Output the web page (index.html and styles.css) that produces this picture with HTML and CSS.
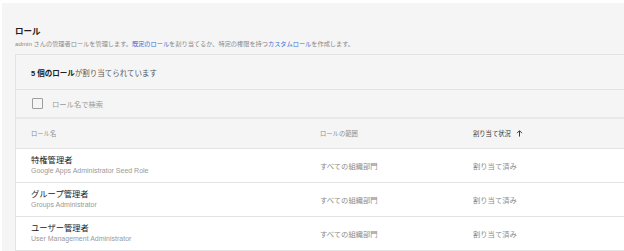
FILE: index.html
```html
<!DOCTYPE html>
<html lang="ja">
<head>
<meta charset="utf-8">
<link rel="stylesheet" href="styles.css">
</head>
<body>
<div class="page">
  <h1 class="title">ロール</h1>
  <p class="desc">admin さんの管理者ロールを管理します。<a class="link">既定のロール</a>を割り当てるか、特定の権限を持つ<a class="link">カスタムロール</a>を作成します。</p>
  <div class="card">
    <div class="card-head"><b>5 個のロール</b>が割り当てられています</div>
    <div class="search"><span class="check"></span><span class="search-text">ロール名で検索</span></div>
    <div class="row head-row">
      <div class="c1">ロール名</div>
      <div class="c2">ロールの範囲</div>
      <div class="c3 sorted">割り当て状況 <svg class="arrow" width="7" height="7" viewBox="0 0 8 8"><path d="M4 7.5V1M1.2 3.6L4 0.8 6.8 3.6" fill="none" stroke="#333" stroke-width="1.1"/></svg></div>
    </div>
    <div class="row data-row">
      <div class="c1"><div class="name">特権管理者</div><div class="sub">Google Apps Administrator Seed Role</div></div>
      <div class="c2">すべての組織部門</div>
      <div class="c3">割り当て済み</div>
    </div>
    <div class="row data-row">
      <div class="c1"><div class="name">グループ管理者</div><div class="sub">Groups Administrator</div></div>
      <div class="c2">すべての組織部門</div>
      <div class="c3">割り当て済み</div>
    </div>
    <div class="row data-row">
      <div class="c1"><div class="name">ユーザー管理者</div><div class="sub">User Management Administrator</div></div>
      <div class="c2">すべての組織部門</div>
      <div class="c3">割り当て済み</div>
    </div>
  </div>
</div>
</body>
</html>
```

FILE: styles.css
```css
* { box-sizing: border-box; }
html, body { margin: 0; padding: 0; background: #ffffff; }
body {
  font-family: "Liberation Sans", Roboto, "Noto Sans CJK JP", sans-serif;
  color: #212121;
  height: 251px;
  overflow: hidden;
}
.page {
  margin: 3px 0 0 2px;
  background: #f5f5f5;
  padding: 23px 0 0 13px;
  height: 260px;
  overflow: hidden;
}
.title {
  margin: 0;
  font-size: 8.5px;
  line-height: 10px;
  font-weight: 700;
  color: #202020;
}
.desc {
  margin: 3px 0 0 0;
  font-size: 6.2px;
  line-height: 9px;
  color: #8a8a8a;
}
.link { color: #3b6fd4; }
.card {
  margin-top: 6px;
  width: 700px;
  border: 1px solid #e3e3e3;
  background: #f5f5f5;
}
.card-head {
  height: 35px;
  padding: 0 0 0 15px;
  display: flex;
  align-items: center;
  font-size: 7.5px;
  color: #555;
  border-bottom: 1px solid #e3e3e3;
}
.card-head b { color: #212121; font-weight: 700; }
.search {
  height: 29px;
  display: flex;
  align-items: center;
  padding-left: 16px;
  border-bottom: 2px solid #e8e8e8;
}
.check {
  width: 11px;
  height: 11px;
  border: 1px solid #9e9e9e;
  border-radius: 1px;
  background: #f5f5f5;
}
.search-text {
  margin-left: 9px;
  font-size: 7.3px;
  color: #9a9a9a;
}
.row {
  display: grid;
  grid-template-columns: 289px 153px 1fr;
  padding-left: 15px;
  border-bottom: 1px solid #e3e3e3;
  align-items: center;
}
.head-row {
  height: 30px;
  font-size: 6.3px;
  color: #8f8f8f;
}
.head-row .sorted { color: #333; display: flex; align-items: center; }
.arrow { margin-left: 5px; }
.data-row {
  height: 34px;
  background: #ffffff;
  font-size: 7.3px;
  color: #8a8a8a;
}
.name {
  font-size: 8.3px;
  line-height: 11px;
  color: #212121;
}
.sub {
  font-size: 7px;
  line-height: 10px;
  color: #9a9a9a;
}
```
